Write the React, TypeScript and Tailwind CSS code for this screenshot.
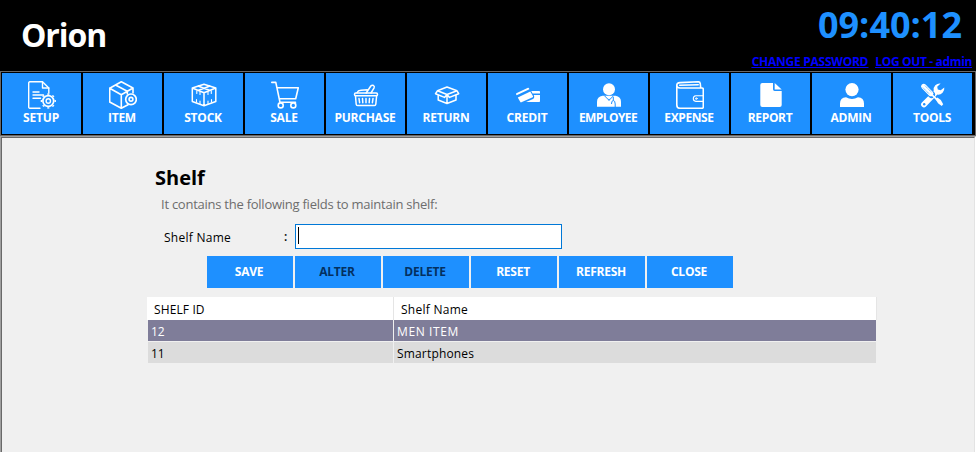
import React from "react";

const line = { fill: "none", stroke: "white", strokeWidth: 1.4, strokeLinejoin: "round" as const, strokeLinecap: "round" as const };

const teeth = [0, 45, 90, 135, 180, 225, 270, 315];

const icons: Record<string, React.ReactNode> = {
  SETUP: (
    <g {...line}>
      <path d="M12 27.2H1.8Q.7 27.2.7 26V2Q.7.8 1.8.8H14.5L20.8 7V12" />
      <path d="M14.5 1V7H20.8" />
      <path d="M5 11H11M5 14H15.5M5 17.3H12.5" />
      <circle cx="20.3" cy="20" r="5.4" strokeWidth="1.7" />
      <circle cx="20.3" cy="20" r="2.2" />
      {teeth.map((a) => (
        <path key={a} d="M20.3 13.8V12.4" strokeWidth="2.1" strokeLinecap="butt" transform={`rotate(${a} 20.3 20)`} />
      ))}
    </g>
  ),
  ITEM: (
    <g {...line} strokeWidth={1.6}>
      <path d="M24 12V7L12.3.8.7 7.2V21L12.3 27.3 19 23.8M.7 7.2 12.3 13.7 24 7M12.3 13.7V27.3M6.5 4 18.3 10.3V13" />
      <circle cx="22" cy="18.3" r="5.3" strokeWidth="1.7" />
      <circle cx="22" cy="18.3" r="1.9" strokeWidth="1.6" />
    </g>
  ),
  STOCK: (
    <g {...line} strokeWidth={1.5}>
      <path d="M14 3.2 25.8 7V20.5L14 24.8 2.3 20.5V7ZM2.3 7 14 11.7 25.8 7M14 11.7V24.8M8 5 20 9.5M20 5 8 9.5" />
      <path d="M6.8 9.8V12.5M10 11V13.5M18 11V13.5M21.3 9.8V12.5M6.5 18.5V21M10 20V22.5M18 20V22.5M21.5 18.5V21" strokeWidth="1.1" />
    </g>
  ),
  SALE: (
    <g {...line} strokeWidth={1.6}>
      <path d="M.8 1.4H4.8L9 21.3H24.5M5.8 6.7H27.3L24.7 17.7H8.2" />
      <circle cx="9.7" cy="24.4" r="2.5" />
      <circle cx="22.3" cy="24.4" r="2.5" />
    </g>
  ),
  PURCHASE: (
    <g {...line} strokeWidth={1.5}>
      <rect x="2.5" y="12" width="23" height="2.8" rx="1.2" />
      <path d="M3.5 15 4.2 23.2Q4.3 24.5 5.6 24.5H22.4Q23.7 24.5 23.8 23.2L24.6 15M7 17.5 7.6 21.7M10.5 17.5 10.8 21.7M14 17.5V21.7M17.5 17.5 17.2 21.7M21 17.5 20.4 21.7" />
      <path d="M5 11.7Q6 9.5 9 9.3L15.2 8.8M14.2 12 18.8 5Q20 3.8 21.5 4.5 22.7 5.3 22.1 6.8L19 12" />
    </g>
  ),
  RETURN: (
    <g {...line} strokeWidth={1.5}>
      <path d="M14 6 24 9.8 14 13.5 4.5 9.8ZM4.5 9.8 2.5 12.7 11.5 16.4 14 13.5 16.5 16.4 25.7 12.7 24 9.8M5.2 14V19L14 22.5 23 19V14M14 14V22.3" />
    </g>
  ),
  CREDIT: (
    <g fill="white">
      <path d="M2.3 12.2 14 6.8Q14.6 6.5 15 7.2L15.4 8.2 2.6 14.2 2 13.1Z" />
      <path d="M3.8 16.5 16.3 10.6 19 15.3Q19.2 16 18.7 16.3L7.4 21.3Q6.7 21.6 6.3 21Z" />
      <path d="M17.2 10H25.2Q26 10 26 10.8V12.4H18.6ZM19.7 14H26V20.2Q26 21 25.2 21H12L19 18Q20.5 17.3 20.2 15.5Z" />
    </g>
  ),
  EMPLOYEE: (
    <g>
      <circle cx="14" cy="8.3" r="6" fill="white" />
      <path d="M2 25.8V21Q2 15.7 7.5 14.8H20.5Q26 15.7 26 21V25.8Z" fill="white" />
      <path d="M9.5 14.8 14 19.3 18.5 14.8M14 17.8V19.5M18.3 16V19.5M16.5 23Q16.5 19.5 18.3 19.5T20.2 23V26" fill="none" stroke="#1e90ff" strokeWidth="1" />
    </g>
  ),
  EXPENSE: (
    <g {...line} strokeWidth={1.6}>
      <path d="M.8 4Q.8 7 4 7H26Q27.3 7 27.3 8.2V26Q27.3 27.3 26 27.3H4Q.8 27.3.8 24V4Q.8 1.8 4 1.6L22.5.8Q24 .8 24.2 2.3L24.7 6.5M3.7 4.2 22.2 3.8" />
      <path d="M27.3 14.7H19.8Q17.3 15 17.3 17.6T19.8 20.4H27.3" strokeWidth="1.1" />
      <circle cx="20.3" cy="17.6" r=".8" strokeWidth="1" />
    </g>
  ),
  REPORT: (
    <g fill="white">
      <path d="M5.3 2H16V8.3Q16 10 17.7 10H24.7V24Q24.7 26 22.7 26H5.3Q3.3 26 3.3 24V4Q3.3 2 5.3 2Z" />
      <path d="M17.7 2 24.7 8.6H17.7Z" />
    </g>
  ),
  ADMIN: (
    <g fill="white">
      <circle cx="14" cy="8.6" r="6.6" />
      <path d="M2 26V22.5Q2 16.5 8 16.2 14 19.8 20 16.2 26 16.5 26 22.5V26Z" />
    </g>
  ),
  TOOLS: (
    <g>
      <path d="M25.3 6.5 21.7 9.2 18.8 8.6 18.2 5.8 21.6 2.5A6.2 6.2 0 0 0 14.7 9.7L2.9 21.4A2.9 2.9 0 0 0 7 25.5L18.4 13.6A6.3 6.3 0 0 0 25.3 6.5Z" fill="white" />
      <circle cx="5.2" cy="23.2" r="1.2" fill="#1e90ff" />
      <path d="M4.5 5.2 12.5 13.5" stroke="#1e90ff" strokeWidth="7" strokeLinecap="round" />
      <path d="M4.7 5.4 11.8 12.6" stroke="white" strokeWidth="5.2" strokeLinecap="round" />
      <path d="M4 6.7 10.5 13.2M6 4.7 12.6 11.3" stroke="#1e90ff" strokeWidth=".7" strokeDasharray="1.4 .7" />
      <path d="M13 13.8 18.5 19.2" stroke="white" strokeWidth="1.7" />
      <path d="M16.5 18.2 18.4 16.6 21.8 19 24.2 23.3 22.7 25 19 22.2Z" fill="white" />
    </g>
  ),
};

const menu = [
  { name: "SETUP", cls: "tracking-[-0.15px]" },
  { name: "ITEM", cls: "tracking-[-0.3px]" },
  { name: "STOCK", cls: "tracking-[-0.2px]" },
  { name: "SALE", cls: "tracking-[-0.2px]" },
  { name: "PURCHASE", cls: "tracking-[-0.25px]" },
  { name: "RETURN", cls: "tracking-[-0.2px]" },
  { name: "CREDIT", cls: "tracking-[-0.2px]" },
  { name: "EMPLOYEE", cls: "tracking-[-0.6px]" },
  { name: "EXPENSE", cls: "tracking-[-0.4px]" },
  { name: "REPORT", cls: "tracking-[-0.35px]" },
  { name: "ADMIN", cls: "tracking-[-0.2px]" },
  { name: "TOOLS", cls: "tracking-[-0.3px]" },
];

const actions = [
  { name: "SAVE", off: false },
  { name: "ALTER", off: true },
  { name: "DELETE", off: true },
  { name: "RESET", off: false },
  { name: "REFRESH", off: false },
  { name: "CLOSE", off: false },
];

export default function App() {
  return (
    <div className="flex h-[452px] w-[976px] flex-col overflow-hidden bg-[#f0f0f0] font-['Open_Sans','Noto_Sans',sans-serif] text-[12px] text-black">
      <header className="flex h-[71px] shrink-0 justify-between bg-black">
        <h1 className="pt-[13px] pl-[21px] text-[32px] leading-[44px] font-bold tracking-[-1.1px] text-white">Orion</h1>
        <div className="flex flex-col items-end pr-[4px]">
          <div className="mr-[10px] h-[54px] text-[36px] leading-[49px] font-bold text-[#1e90ff]">09:40:12</div>
          <div className="flex gap-[7px] leading-[16px] font-bold whitespace-nowrap text-[#0000ff] underline decoration-1 underline-offset-[1px] [text-decoration-skip-ink:none]">
            <a className="tracking-[-0.25px]">CHANGE PASSWORD</a>
            <a className="tracking-[-0.35px]">LOG OUT - admin</a>
          </div>
        </div>
      </header>
      <nav className="flex h-[65px] shrink-0 gap-[2px] border border-[#696969] bg-black pt-px pl-px">
        {menu.map((m) => (
          <button key={m.name} className="flex h-[61px] w-[79px] shrink-0 flex-col items-center bg-[#1e90ff] pt-[8px] font-bold text-white">
            <svg width="28" height="28" viewBox="0 0 28 28" className="mr-[-1px] shrink-0">{icons[m.name]}</svg>
            <span className={`mt-px mr-[1px] leading-[16px] whitespace-nowrap ${m.cls}`}>{m.name}</span>
          </button>
        ))}
      </nav>
      <main className="flex-1 border-t border-r border-l border-[#a0a0a0] border-r-white">
        <div className="h-full border-t border-r border-l border-[#696969] border-r-[#e3e3e3]">
          <h2 className="pt-[26px] pl-[153px] text-[20px] leading-[27px] font-bold">Shelf</h2>
          <p className="mt-[4px] pl-[159px] text-[13px] leading-[18px] tracking-[-0.25px] text-[#6d6d6d]">It contains the following fields to maintain shelf:</p>
          <div className="mt-[11px] flex h-[25px] items-center pl-[162px]">
            <label className="w-[120px] pt-[2px] tracking-[0.27px]">Shelf Name</label>
            <span className="w-[11px] font-semibold">:</span>
            <div className="h-[25px] w-[267px] border border-[#0078d7] bg-white pt-[2px] pl-[2px]">
              <div className="h-[17px] w-px bg-black" />
            </div>
          </div>
          <div className="mt-[7px] flex gap-[2px] pl-[205px]">
            {actions.map((a) => (
              <button key={a.name} className={`h-[32px] w-[86px] bg-[#1e90ff] pr-[2px] font-bold tracking-[-0.25px] ${a.off ? "text-[#04305f]" : "text-white"}`}>
                {a.name}
              </button>
            ))}
          </div>
          <div className="mt-[9px] ml-[145px] flex w-[730px] flex-col">
            <div className="flex h-[23px] border-r border-[#e5e5e5] bg-white leading-[25px]">
              <div className="w-[247px] border-r border-[#e5e5e5] pl-[7px] tracking-[0.12px]">SHELF ID</div>
              <div className="pl-[7px] tracking-[0.27px]">Shelf Name</div>
            </div>
            <div className="mr-px ml-px flex h-[22px] border-b border-[#f0f0f0] bg-[#7f7d99] leading-[23px] text-white">
              <div className="w-[246px] border-r border-[#f0f0f0] pl-[3px]">12</div>
              <div className="pl-[3px] tracking-[0.6px]">MEN ITEM</div>
            </div>
            <div className="mr-px ml-px flex h-[22px] border-b border-[#f0f0f0] bg-[#dcdcdc] leading-[23px]">
              <div className="w-[246px] border-r border-[#f0f0f0] pl-[3px]">11</div>
              <div className="pl-[3px] tracking-[0.17px]">Smartphones</div>
            </div>
          </div>
        </div>
      </main>
    </div>
  );
}
